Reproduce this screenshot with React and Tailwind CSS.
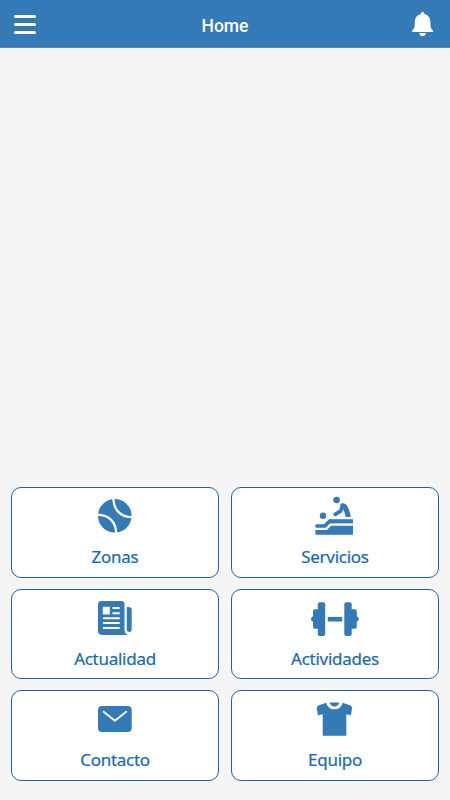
import React from "react";

const BLUE = "#337ab7";

const items = [
  {
    label: "Zonas",
    icon: (
      <svg width="60" height="50" viewBox="85 491 60 50">
        <circle cx="114.8" cy="515.8" r="16.8" fill={BLUE} />
        <path d="M113.4 498.5C113.8 510 120.5 517 132 517.2M97.5 514.6C109 515 116 522 116.2 533" fill="none" stroke="#fff" strokeWidth="2.3" />
      </svg>
    ),
  },
  {
    label: "Servicios",
    icon: (
      <svg width="60" height="50" viewBox="305 491 60 50" fill={BLUE}>
        <circle cx="336.6" cy="500" r="3.3" />
        <circle cx="323" cy="515.7" r="3.2" />
        <path d="M335.2 514.4L340.6 511.2L342.4 505.6" fill="none" stroke={BLUE} strokeWidth="3.7" strokeLinecap="round" strokeLinejoin="round" />
        <path d="M340.2 504.6C342 502.2 345.4 502.8 347.2 506C349 509.2 350.3 512.8 350.7 517H345.6C345.2 513 343.8 509.8 341.6 507Z" />
        <path d="M317 526H325L329.5 521.3H331" fill="none" stroke={BLUE} strokeWidth="3.7" strokeLinecap="round" strokeLinejoin="round" />
        <path d="M329 519.2H353V523.4H329Z" />
        <path d="M315.4 530.1H326.8L331.2 525.8H353V534.8H315.4Z" />
      </svg>
    ),
  },
  {
    label: "Actualidad",
    icon: (
      <svg width="60" height="50" viewBox="85 593 60 50" fill={BLUE}>
        <path d="M101.5 601H121.5Q124.5 601 124.5 604V630Q124.5 633 127.5 634.9H102Q98 634.9 98 630.5V604.5Q98 601 101.5 601Z" />
        <path d="M126.8 607H128.5Q131.7 607 131.7 610V629.5Q131.7 632 129.3 632Q126.8 632 126.8 629.5Z" />
        <g fill="#fff">
          <rect x="102.8" y="606.8" width="7" height="7.8" rx=".6" />
          <rect x="112.3" y="607" width="7.6" height="2" rx=".8" />
          <rect x="112.3" y="612.2" width="7.6" height="2" rx=".8" />
          <rect x="102.8" y="617.2" width="17.1" height="2" rx=".8" />
          <rect x="102.8" y="622.1" width="17.1" height="2" rx=".8" />
          <rect x="102.8" y="627" width="17.1" height="2" rx=".8" />
        </g>
      </svg>
    ),
  },
  {
    label: "Actividades",
    icon: (
      <svg width="60" height="50" viewBox="305 593 60 50" fill={BLUE}>
        <rect x="317.8" y="602.2" width="7.4" height="33.8" rx="2" />
        <rect x="313" y="609.3" width="8" height="19.4" rx="2" />
        <path d="M314 616.5H312.5Q311 617.5 311 619Q311 620.8 312.5 621.6H314Z" />
        <rect x="327.8" y="616.9" width="14.4" height="4.6" />
        <rect x="344.3" y="602.2" width="7.4" height="33.8" rx="2" />
        <rect x="348.8" y="609.3" width="8" height="19.4" rx="2" />
        <path d="M355.8 616.5H357.3Q358.8 617.5 358.8 619Q358.8 620.8 357.3 621.6H355.8Z" />
      </svg>
    ),
  },
  {
    label: "Contacto",
    icon: (
      <svg width="60" height="50" viewBox="85 694 60 50">
        <rect x="98" y="706" width="33.7" height="26" rx="4" fill={BLUE} />
        <path d="M103.6 711.8L114.9 720.7L126.2 711.8" fill="none" stroke="#fff" strokeWidth="1.9" strokeLinecap="round" strokeLinejoin="round" />
      </svg>
    ),
  },
  {
    label: "Equipo",
    icon: (
      <svg width="60" height="50" viewBox="305 694 60 50" fill={BLUE}>
        <path d="M326.3 702.7C328 711.5 341 711.5 342.6 702.7L350.5 705.6Q352.3 706.5 352 708.5L351 715.2L346.3 714.3V735.8H322.7V714.3L318 715.2L316.7 708.5Q316.4 706.5 318.3 705.6Z" />
        <path d="M329.5 702.5H339.4C338 708 331 708 329.5 702.5Z" />
      </svg>
    ),
  },
];

export default function App() {
  return (
    <div className="flex h-[800px] w-[450px] flex-col overflow-hidden bg-[#f5f5f5] font-['Noto_Sans','Open_Sans',sans-serif]">
      <header className="flex h-12 shrink-0 items-center justify-between border-b border-[#5a86b4] bg-[#337ab7] pr-[15px] pl-[14px] text-white">
        <button aria-label="Menu" className="flex w-[22px] flex-col gap-[5px] pt-px">
          <span className="h-[3px] rounded-full bg-white" />
          <span className="h-[3px] rounded-full bg-white" />
          <span className="h-[3px] rounded-full bg-white" />
        </button>
        <h1 className="pt-[4px] pl-[3px] font-['Roboto',sans-serif] text-[17.5px] leading-6 font-medium">Home</h1>
        <button aria-label="Notifications">
          <svg width="24" height="28" viewBox="411 10 24 28" fill="#fff">
            <path d="M422.6 12C423.8 12 424.5 12.8 424.4 14C428.6 15 430.4 18.3 430.4 22.5C430.4 27.2 431 28.8 433.2 30.8Q433.6 32 432.2 32H413Q411.6 32 412 30.8C414.2 28.8 414.8 27.2 414.8 22.5C414.8 18.3 416.6 15 420.8 14C420.7 12.8 421.4 12 422.6 12Z" />
            <path d="M419.3 33H425.8Q425.2 36.2 422.5 36.2Q419.9 36.2 419.3 33Z" />
          </svg>
        </button>
      </header>
      <main className="mt-auto grid grid-cols-2 gap-x-3 gap-y-[11px] px-[11px] pb-[19.5px]">
        {items.map(({ label, icon }) => (
          <button key={label} className="flex h-[90.5px] flex-col items-center rounded-[10px] border border-[#1d5fa8] bg-white pt-[3px]">
            {icon}
            <span className="mt-[4px] text-[17px] leading-6 font-normal tracking-[-0.27px] text-[#1769b3] [-webkit-text-stroke:0.2px_#1769b3]">{label}</span>
          </button>
        ))}
      </main>
    </div>
  );
}
